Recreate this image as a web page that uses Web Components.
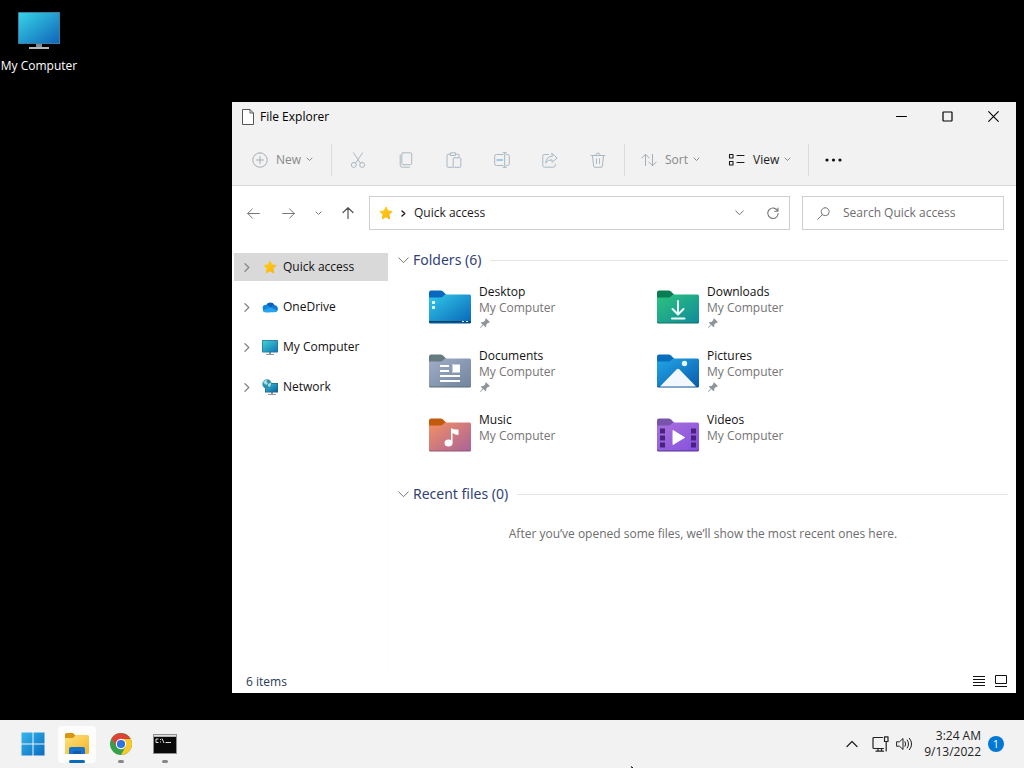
<!DOCTYPE html>
<html lang="en">
<head>
<meta charset="utf-8">
<title>File Explorer</title>
<style>
html, body { margin: 0; height: 100%; background: #000; }
body { font: 12px/16px "Open Sans", "Noto Sans", sans-serif; color: #1a1a1a; overflow: hidden; }
</style>
</head>
<body>
<desktop-screen>
  <desktop-shortcut icon="monitor" label="My Computer"></desktop-shortcut>
  <explorer-window slot="window">
    <title-bar slot="title" label="File Explorer"></title-bar>
    <command-bar slot="commands"></command-bar>
    <address-bar slot="address" label="Quick access"></address-bar>
    <nav-item slot="nav" icon="star" label="Quick access" selected></nav-item>
    <nav-item slot="nav" icon="cloud" label="OneDrive"></nav-item>
    <nav-item slot="nav" icon="pc" label="My Computer"></nav-item>
    <nav-item slot="nav" icon="network" label="Network"></nav-item>
    <folder-group label="Folders (6)">
      <folder-tile icon="desktop" label="Desktop" pinned></folder-tile>
      <folder-tile icon="downloads" label="Downloads" pinned></folder-tile>
      <folder-tile icon="documents" label="Documents" pinned></folder-tile>
      <folder-tile icon="pictures" label="Pictures" pinned></folder-tile>
      <folder-tile icon="music" label="Music"></folder-tile>
      <folder-tile icon="videos" label="Videos"></folder-tile>
    </folder-group>
    <folder-group label="Recent files (0)" empty="After you’ve opened some files, we’ll show the most recent ones here."></folder-group>
    <status-bar slot="status" label="6 items"></status-bar>
  </explorer-window>
  <task-bar slot="taskbar"></task-bar>
</desktop-screen>
<script>
const line = (w, h, d, sw = 1) => [w, h, `<path fill="none" stroke="currentColor" stroke-width="${sw}" stroke-linecap="round" stroke-linejoin="round" d="${d}"/>`];
const grad = (id, a, b) => `<linearGradient id="${id}" x1="0" y1="0" x2="1" y2="1"><stop offset="0" stop-color="${a}"/><stop offset="1" stop-color="${b}"/></linearGradient>`;
const folder = (tab, a, b, edge, art) => [42, 34, `<defs>${grad('g', a, b)}</defs>
  <path fill="${tab}" d="M0 9V2.500Q0 .5 2 .5H11.500Q13 .5 14 1.500L17.500 5V9z"/>
  <path fill="${edge}" d="M0 31.500V8H42V32Q42 33.500 40.500 33.500H1.500Q0 33.500 0 32z"/>
  <path fill="url(#g)" d="M0 31V7.500H11.500Q13 7.500 14 6.500L16 4.500H40.500Q42 4.500 42 6V31Q42 32.500 40.500 32.500H1.500Q0 32.500 0 31z"/>${art}`];
const star = 'M7 1 8.900 4.900 13 5.500 10 8.500 10.700 12.900 7 10.800 3.300 12.900 4 8.500 1 5.500 5.100 4.900z';

const ICONS = {
  monitor: [42, 38, `<defs>${grad('g', '#36d3e6', '#1065ba')}</defs><path fill="#7d8b92" d="M18 31h6v5h-6z"/><path fill="#b4b8ba" d="M11 35h20v2H11z"/><path fill="#3c7f9c" d="M0 0h42v32H0z"/><path fill="url(#g)" d="M1 1h40v30H1z"/>`],
  page: [12, 16, `<path fill="#fff" stroke="#555" d="M.5 .5H8L11.500 4V15.500H.5z"/><path fill="none" stroke="#555" d="M8 .5V4H11.500"/>`],
  min: line(11, 11, 'M.5 5.500H10.500'),
  max: line(11, 11, 'M1.500 1H9.500Q10 1 10 1.500V9.500Q10 10 9.500 10H1.500Q1 10 1 9.500V1.500Q1 1 1.500 1z', 1.200),
  close: line(11, 11, 'M.7 .7 10.300 10.300M10.300 .7 .7 10.300', 1.100),
  plus: line(16, 16, 'M8 .8A7.200 7.200 0 1 1 8 15.200A7.200 7.200 0 1 1 8 .8M8 4.500V11.500M4.500 8H11.500'),
  chev: line(7, 5, 'M1 1 3.500 3.500 6 1'),
  cut: line(16, 16, 'M3.500 .8 10.300 11M12.500 .8 5.700 11M3.800 10.400A2.500 2.500 0 1 1 3.800 15.400A2.500 2.500 0 1 1 3.800 10.400M12.200 10.400A2.500 2.500 0 1 1 12.200 15.400A2.500 2.500 0 1 1 12.200 10.400'),
  copy: line(16, 16, 'M5 .8H12.500Q13.700 .8 13.700 2V11.500Q13.700 12.700 12.500 12.700H5Q3.800 12.700 3.800 11.500V2Q3.800 .8 5 .8M2.200 3V13.200Q2.200 15.200 4.200 15.200H11.500'),
  paste: line(16, 16, 'M6.500 15.300H2Q1 15.300 1 14.300V3.200Q1 2.200 2 2.200H4.800M4.800 .8H9.500V3.500H4.800zM9.500 2.200H12Q13 2.200 13 3.200V4.800M8.200 5.800H13.800Q14.800 5.800 14.800 6.800V14.300Q14.800 15.300 13.800 15.300H8.200Q7.200 15.300 7.200 14.300V6.800Q7.200 5.800 8.200 5.800'),
  rename: [16, 16, `<g fill="none" stroke="currentColor" stroke-linecap="round"><path d="M9 2.500H2.500Q.7 2.500 .7 4.300V11.700Q.7 13.500 2.500 13.500H9M12.500 2.500H13.500Q15.300 2.500 15.300 4.300V11.700Q15.300 13.500 13.500 13.500H12.500M9 .7H12.500M9 15.300H12.500M10.700 .7V15.300"/><path stroke="#8db6d3" stroke-width="1.500" d="M3 8H8.500"/></g>`],
  share: line(16, 16, 'M6.500 2.500H2.500Q.8 2.500 .8 4.200V13.500Q.8 15.200 2.500 15.200H11.500Q13.200 15.200 13.200 13.500V12M10 1.500 15.200 6 10 10.300V7.800Q6 7.600 3.700 11Q4.300 4.600 10 4.200z'),
  trash: line(16, 16, 'M1 3.500H15M5.800 3.500Q5.800 1 8 1Q10.200 1 10.200 3.500M2.500 3.500 3.600 14Q3.700 15.300 5 15.300H11Q12.300 15.300 12.400 14L13.500 3.500M6.500 6.800V11.500M9.500 6.800V11.500'),
  sort: line(16, 14, 'M4.500 12.500V1.500M.8 5 4.500 1.200 8.200 5M11.500 1.500V12.500M7.800 9 11.500 12.800 15.200 9'),
  view: line(17, 14, 'M1.500 1.500H5V5H1.500zM1.500 8.500H5V12H1.500zM9 2.500H16M9 9.500H16', 1.100),
  dots: [17, 4, '<g fill="#111"><circle cx="2" cy="2" r="1.600"/><circle cx="8.500" cy="2" r="1.600"/><circle cx="15" cy="2" r="1.600"/></g>'],
  back: line(13, 11, 'M12.300 5.500H.7M5.300 1 .7 5.500 5.300 10'),
  forward: line(13, 11, 'M.7 5.500H12.300M7.700 1 12.300 5.500 7.700 10'),
  up: line(12, 12, 'M6 11.500V.8M1 5.500 6 .7 11 5.500', 1.200),
  down: line(9, 6, 'M.7 .8 4.500 4.700 8.300 .8'),
  fold: line(11, 7, 'M.7 .8 5.500 5.700 10.300 .8'),
  right: line(5, 7, 'M1 1 3.800 3.500 1 6', 1.400),
  expand: line(6, 9, 'M1 .8 4.800 4.500 1 8.200', 1.300),
  refresh: line(12, 12, 'M10.800 4.200A5.200 5.200 0 1 0 11.200 6.500M11 1V4.300H7.700', 1.100),
  search: line(13, 13, 'M8.200 .7A4 4 0 1 1 8.200 8.700A4 4 0 1 1 8.200 .7M5.200 7.700 .7 12.300'),
  star: [14, 14, `<defs>${grad('g', '#ffd21c', '#f6b20d')}</defs><path fill="url(#g)" stroke="url(#g)" stroke-linejoin="round" d="${star}"/>`],
  cloud: [16, 12, `<path fill="#0b61b8" d="M4 4.500A4.700 4.700 0 0 1 12.500 4L11 8 3 7z"/><path fill="#1685dc" d="M1 8.500Q-.5 4 4 3.700Q6 3.700 11 7.500L8 11.300H3.500Q1 11.300 1 8.500"/><path fill="#1478d0" d="M9 6Q10.500 3.800 12.500 4Q15.800 4.700 15.900 8Q15.900 10 14 11L8 8z"/><path fill="#25a5ef" d="M.8 9.300 8.500 6.500 15.500 9.500Q14.800 11.300 12.800 11.300H3.500Q1.500 11.200 .8 9.300z"/>`],
  pc: [16, 15, `<defs>${grad('g', '#3fd1d5', '#1176b5')}</defs><path fill="#8b999f" d="M7 12h2v2h3v1H4v-1h3z"/><rect width="16" height="12.500" rx=".8" fill="#26758f"/><rect x=".7" y=".7" width="14.600" height="11" fill="url(#g)"/>`],
  network: [16, 16, `<defs>${grad('g', '#39c5dc', '#0c5f9e')}</defs><path fill="#8b999f" d="M9 13h2v2h3v1H6v-1h3z"/><path fill="#22657b" d="M3 4h13v9.500H3z"/><path fill="url(#g)" d="M3.700 4.700h11.600v8.100H3.700z"/><circle cx="5" cy="5" r="4.700" fill="#318fae"/><path fill="#a1dedf" d="M1 3Q3 .5 5.500 .4L4.500 2.500 6 4 4.500 6 2.500 5zM6 5 9 3.500Q9.500 6 7.500 8.200L6 7z"/>`],
  desktop: folder('#0868be', '#33c9e8', '#0867ba', '#07558b', '<path fill="#d9f8fc" d="M3 11h3v3H3zM3 16h3v3H3z"/><path fill="#0b426f" d="M0 31h42v1.500H0z"/><path fill="#d6ecf5" d="M33 31h2v1h-2zM37 31h2v1h-2z"/>'),
  downloads: folder('#087d53', '#2dc47d', '#108b9b', '#0c715e', '<path fill="none" stroke="#effff9" stroke-width="2" stroke-linecap="round" stroke-linejoin="round" d="M21 11V24M15.500 19 21 24.500 26.500 19M15 28.500H27.500"/>'),
  documents: folder('#657b80', '#a1acc9', '#71869d', '#5b6c7a', '<path fill="none" stroke="#fff" stroke-width="2" d="M11 12H20M11 17H20M11 22H31M11 27H31"/><path fill="#fff" d="M23 10.500h8v8h-8z"/><path fill="#c5cedf" d="M23 10.500h1v8h-1z"/>'),
  pictures: folder('#086dba', '#22a6e8', '#095dac', '#0a4f8e', '<path fill="#f3f7ff" d="M3 32.500 19.500 15.500Q21 14 22.500 15.500L39 32.500z"/><circle cx="27.500" cy="9.500" r="2.700" fill="#e5f8ff"/>'),
  music: folder('#c25a0c', '#f39062', '#a96499', '#9d526c', '<ellipse cx="19.500" cy="25" rx="4" ry="3.500" fill="#fff"/><path fill="#fff" d="M22 10Q24 11.500 29.500 11.500V17Q26 17 23.500 15V25H22z"/>'),
  videos: folder('#7853ab', '#aa71dd', '#8350dd', '#563191', '<path fill="#4a217f" d="M3 10.500h5v5H3zM3 17.500h5v5H3zM3 24.500h5v5H3zM34 10.500h5v5h-5zM34 17.500h5v5h-5zM34 24.500h5v5h-5z"/><path fill="#fff" stroke="#fff" stroke-linejoin="round" d="M16 12.500V26.500L27.500 19.500z"/>'),
  pin: [11, 10, '<path fill="#8e9499" d="M7 .2 10.800 4 10 5 9.200 4.700 7.300 6.600 7.200 8.500 6.400 9.200 4.300 7.100 1.500 9.900 1 9.400 3.700 6.600 1.800 4.700 2.600 4 4.500 3.900 6.400 1.900 6.200 1z"/>'],
  details: [12, 10, '<path stroke="#111" d="M0 .5H12M0 3.500H12M0 6.500H12M0 9.500H12"/>'],
  large: [12, 12, '<path fill="none" stroke="#111" d="M.5 .5H11.500V8.500H.5zM0 11.500H12"/>'],
  windows: [24, 24, `<defs><linearGradient id="g" gradientUnits="userSpaceOnUse" x1="0" y1="0" x2="24" y2="24"><stop offset="0" stop-color="#36b9ee"/><stop offset="1" stop-color="#0869bf"/></linearGradient></defs><path fill="url(#g)" d="M.5 .5h11v11H.5zM12.500 .5h11v11h-11zM.5 12.500h11v11H.5zM12.500 12.500h11v11h-11z"/>`],
  files: [26, 24, `<defs>${grad('g', '#ffe07a', '#f4b728')}</defs><path fill="#d9960f" d="M1 6V2.500Q1 1 2.500 1H9L12 4V8H1z"/><path fill="url(#g)" d="M1 22V6H9L12 3H23.500Q25 3 25 4.500V20.500Q25 22 23.500 22z"/><path fill="#1674ce" d="M5 22V17Q5 15 7 15H19Q21 15 21 17V22z"/><path fill="#0f5eac" d="M9 19h8v3H9z"/>`],
  chrome: [22, 22, '<circle cx="11" cy="11" r="11" fill="#34a04b"/><path fill="#dc4335" d="M1.470 5.500 6.700 14 11 6H20.530A11 11 0 0 0 1.470 5.500"/><path fill="#fbc82c" d="M11 6H20.800A11 11 0 0 1 11 22L15.600 13.500z"/><circle cx="11" cy="11" r="5.200" fill="#fff"/><circle cx="11" cy="11" r="4.100" fill="#2f72dd"/>'],
  terminal: [24, 20, '<path fill="#8e8e8e" d="M0 0h24v20H0z"/><path fill="#090909" d="M1 3h22v16H1z"/><path fill="#dedede" d="M1 1h22v1.500H1z"/><path fill="none" stroke="#ddd" d="M5.500 5H3V8.500H5.500M7.500 5v1M7.500 7.500v1M9 4.500 11 9M12.500 8.500H18"/>'],
  caret: line(12, 8, 'M1 6.500 6 1.500 11 6.500', 1.200),
  lan: line(17, 16, 'M10.500 1.500H2Q1 1.500 1 2.500V11.500Q1 12.500 2 12.500H11.500M4 15.200H11.500M6 12.500V15M9.500 12.500V15M12.500 .8H16V5.500H12.500zM14.200 5.500V15', 1.200),
  sound: line(17, 14, 'M1 4.800H3.500L7 1.500V12.500L3.500 9.200H1zM9 4.700Q10.500 7 9 9.300M11.200 3Q14 7 11.200 11M13.400 1.300Q18 7 13.400 12.700'),
  cursor: [12, 19, '<path fill="#111" stroke="#fff" d="M.8 .8V16L4.500 12.500 7 18 9 17 6.700 11.500H11.500z"/>']
};

class Base extends HTMLElement {
  connectedCallback() {
    if (this.shadowRoot) return;
    const t = document.createElement('template');
    t.innerHTML = `<style>:host,*{box-sizing:border-box}button{font:inherit;color:inherit;background:none;border:0;padding:0;margin:0}svg{display:block}${this.css}</style>${this.html()}`;
    this.attachShadow({ mode: 'open' }).append(t.content.cloneNode(true));
  }
  at(name) { return this.getAttribute(name) || ''; }
  get css() { return ''; }
}
const def = (name, css, html) => customElements.define(name, class extends Base {
  get css() { return css; }
  html() { return html(this); }
});
const ico = n => `<ui-icon name="${n}"></ui-icon>`;

def('ui-icon', ':host{display:block;flex:none}', e => {
  const [w, h, art] = ICONS[e.at('name')];
  return `<svg width="${w}" height="${h}" viewBox="0 0 ${w} ${h}" aria-hidden="true">${art}</svg>`;
});

def('desktop-screen', `
  :host{display:flex;flex-direction:column;height:100vh;position:relative;background:#000}
  main{flex:1;min-height:0;position:relative;padding-top:12px}
  .cursor{position:absolute;left:630px;top:764px}
`, () => `<main><slot></slot><slot name="window"></slot></main><slot name="taskbar"></slot><div class="cursor">${ico('cursor')}</div>`);

def('desktop-shortcut', `
  :host{display:block;width:78px;color:#fff}
  button{width:100%;display:flex;flex-direction:column;align-items:center;gap:8px;white-space:nowrap}
`, e => `<button>${ico(e.at('icon'))}<span>${e.at('label')}</span></button>`);

def('explorer-window', `
  :host{position:absolute;left:232px;right:8px;top:102px;bottom:27px;display:flex;flex-direction:column;background:#fff}
  .body{flex:1;min-height:0;display:grid;grid-template-columns:156px 1fr;padding-top:12px}
  nav{display:flex;flex-direction:column;gap:12px;padding:11px 0 0 2px}
  section{border-left:1px solid #fbfbfb;padding:8px 8px 0 9px;display:flex;flex-direction:column;gap:8px}
`, () => `<slot name="title"></slot><slot name="commands"></slot><slot name="address"></slot>
  <div class="body"><nav><slot name="nav"></slot></nav><section><slot></slot></section></div><slot name="status"></slot>`);

def('title-bar', `
  :host{display:flex;align-items:center;height:30px;padding-left:10px;background:#f2f2f2;color:#000}
  span{flex:1;padding-left:6px}
  button{width:46px;height:28px;display:grid;place-items:center;align-self:flex-start}
`, e => `${ico('page')}<span>${e.at('label')}</span><button aria-label="Minimize">${ico('min')}</button><button aria-label="Maximize">${ico('max')}</button><button aria-label="Close">${ico('close')}</button>`);

def('command-bar', `
  :host{display:flex;align-items:center;height:54px;padding:2px 0 0 12px;background:#f2f2f2;border-bottom:1px solid #d9d9d9;color:#888}
  button{height:32px;display:flex;align-items:center;padding:0 8px}
  .i{width:48px;padding:0;justify-content:center;color:#a9b8c2}
  .more{width:44px}
  .lead{color:#a3adb4;margin-right:8px}
  .on .lead{color:#1a1a1a}
  .chev{color:#888;margin-left:5px}
  button.on{color:#1a1a1a}
  hr{width:1px;height:32px;margin:0 2px;border:0;background:#dcdcdc}
  .new{width:85px} .sort{width:87px;margin-left:6px} .view{width:81px;margin-right:5px}
`, () => {
  const menu = (c, i, t) => `<button class="${c}"><span class="lead">${ico(i)}</span><span>${t}</span><span class="chev">${ico('chev')}</span></button>`;
  return menu('new', 'plus', 'New') + '<hr>' +
    [['cut', 'Cut'], ['copy', 'Copy'], ['paste', 'Paste'], ['rename', 'Rename'], ['share', 'Share'], ['trash', 'Delete']].map(([i, t]) => `<button class="i" aria-label="${t}">${ico(i)}</button>`).join('') +
    '<hr>' + menu('sort', 'sort', 'Sort') + menu('view on', 'view', 'View') + `<hr><button class="i more" aria-label="See more">${ico('dots')}</button>`;
});

def('address-bar', `
  :host{display:flex;align-items:center;padding:10px 12px 0 8px;color:#777}
  button{display:grid;place-items:center;height:32px}
  .go{width:26px} .fw{width:44px} .hist{width:16px} .up{width:43px;color:#555}
  .path{flex:1;display:flex;align-items:center;height:34px;border:1px solid #cfcfcf;padding-left:9px;margin-right:12px}
  .path .crumb{display:flex;align-items:center;gap:8px;flex:1;color:#1a1a1a;text-align:left}
  .path .act{width:33px}
  label{width:202px;height:34px;border:1px solid #cfcfcf;display:flex;align-items:center;gap:13px;padding:0 14px}
  input{flex:1;min-width:0;border:0;padding:0;outline:0;background:none;font:inherit;color:#1a1a1a}
  input::placeholder{color:#6d6d6d;opacity:1}
`, e => `<button class="go" aria-label="Back">${ico('back')}</button><button class="fw" aria-label="Forward">${ico('forward')}</button><button class="hist" aria-label="Recent locations">${ico('chev')}</button><button class="up" aria-label="Up">${ico('up')}</button>
  <div class="path"><button class="crumb">${ico('star')}${ico('right')}<span>${e.at('label')}</span></button><button class="act" aria-label="Previous locations">${ico('down')}</button><button class="act" aria-label="Refresh">${ico('refresh')}</button></div>
  <label aria-label="Search">${ico('search')}<input type="text" placeholder="Search Quick access"></label>`);

def('nav-item', `
  :host{display:block}
  button{width:100%;height:28px;display:flex;align-items:center;padding-left:10px;color:#111}
  :host([selected]) button{background:#d9d9d9}
  .x{color:#888;width:18px}
  .p{width:16px;display:grid;place-items:center;margin-right:5px}
`, e => `<button><span class="x">${ico('expand')}</span><span class="p">${ico(e.at('icon'))}</span><span>${e.at('label')}</span></button>`);

def('folder-group', `
  :host{display:block}
  h2{margin:0;font:400 14px/20px "Noto Sans","Open Sans",sans-serif;color:#333f78}
  h2 button{width:100%;display:flex;align-items:center;gap:4px;text-align:left}
  .f{color:#777}
  i{flex:1;height:1px;background:#e5e5e5;margin-left:5px}
  .grid{display:grid;grid-template-columns:repeat(2,228px);grid-auto-rows:64px;padding:14px 0 0 31px}
  p{margin:0;padding:22px 0;text-align:center;color:#6d6d6d}
`, e => `<h2><button><span class="f">${ico('fold')}</span><span>${e.at('label')}</span><i></i></button></h2>` +
  (e.at('empty') ? `<p>${e.at('empty')}</p>` : '<div class="grid"><slot></slot></div>'));

def('folder-tile', `
  :host{display:block}
  button{display:flex;gap:8px;text-align:left;align-items:flex-start}
  .art{padding-top:6px}
  b,small{display:block;font:inherit}
  b{color:#111} small{color:#747474}
  .pin{display:block;padding-top:2px}
`, e => `<button><span class="art">${ico(e.at('icon'))}</span><span><b>${e.at('label')}</b><small>My Computer</small>${e.hasAttribute('pinned') ? `<span class="pin">${ico('pin')}</span>` : ''}</span></button>`);

def('status-bar', `
  :host{display:flex;align-items:center;height:24px;padding:0 9px 0 14px;color:#283a55}
  span{flex:1;padding-top:2px}
  button{margin-left:10px}
`, e => `<span>${e.at('label')}</span><button aria-label="Details">${ico('details')}</button><button aria-label="Large icons">${ico('large')}</button>`);

def('task-bar', `
  :host{display:flex;align-items:center;height:48px;padding:0 20px 0 11px;background:#f2f2f2;color:#222}
  .apps{display:flex;flex:1}
  .apps button{width:44px;height:48px;display:grid;place-items:center;position:relative}
  .apps .active::before{content:"";position:absolute;inset:6px 3px 5px;background:#fdfdfd;border-radius:4px}
  .apps ui-icon{position:relative}
  .apps .run::after{content:"";position:absolute;bottom:5px;left:19px;width:6px;height:3px;border-radius:2px;background:#888}
  .apps .active::after{left:14px;width:16px;background:#0a6cbd}
  .tray{display:flex;align-items:center}
  .tray button{display:grid;place-items:center;height:32px}
  .c{width:28px} .n{width:28px} .s{width:20px}
  .tray .clock{display:block;text-align:right;width:67px}
  .badge{width:16px;height:16px;border-radius:50%;background:#0078d4;color:#fff;font-size:11px;line-height:16px;text-align:center;margin-left:7px}
`, () => `<div class="apps"><button aria-label="Start">${ico('windows')}</button><button class="run active" aria-label="File Explorer">${ico('files')}</button><button class="run" aria-label="Chrome">${ico('chrome')}</button><button class="run" aria-label="Command Prompt">${ico('terminal')}</button></div>
  <div class="tray"><button class="c" aria-label="Hidden icons">${ico('caret')}</button><button class="n" aria-label="Network">${ico('lan')}</button><button class="s" aria-label="Volume">${ico('sound')}</button><button class="clock">3:24 AM<br>9/13/2022</button><span class="badge">1</span></div>`);
</script>
</body>
</html>
